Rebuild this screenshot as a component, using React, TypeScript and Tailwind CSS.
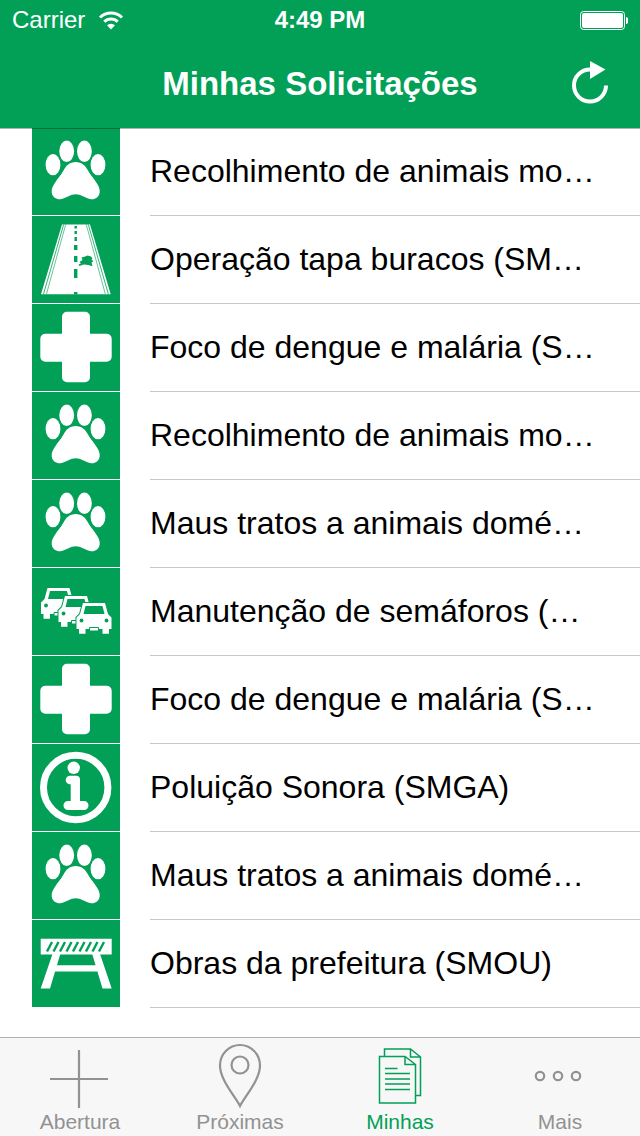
import React from "react";

type IconName = "paw" | "road" | "cross" | "cars" | "info" | "barrier";

const requests: { id: number; icon: IconName; title: string }[] = [
  { id: 1, icon: "paw", title: "Recolhimento de animais mo…" },
  { id: 2, icon: "road", title: "Operação tapa buracos (SM…" },
  { id: 3, icon: "cross", title: "Foco de dengue e malária (S…" },
  { id: 4, icon: "paw", title: "Recolhimento de animais mo…" },
  { id: 5, icon: "paw", title: "Maus tratos a animais domé…" },
  { id: 6, icon: "cars", title: "Manutenção de semáforos (…" },
  { id: 7, icon: "cross", title: "Foco de dengue e malária (S…" },
  { id: 8, icon: "info", title: "Poluição Sonora (SMGA)" },
  { id: 9, icon: "paw", title: "Maus tratos a animais domé…" },
  { id: 10, icon: "barrier", title: "Obras da prefeitura (SMOU)" },
];

const GREEN = "#02a057";

const Car = ({ x, y }: { x: number; y: number }) => (
  <g transform={`translate(${x} ${y})`}>
    <path
      d="M6.500 0h22l3 11 3.500 3.500V26h-2.500v4.800h-6.500V26H9v4.800H2.500V26H0V14.500L3.500 11z"
      fill="white"
      stroke={GREEN}
      strokeWidth="2"
      paintOrder="stroke"
    />
    <path d="M9 3h17l2 8H7z" fill={GREEN} />
    <circle cx="5" cy="17.500" r="1.900" fill={GREEN} />
    <circle cx="30" cy="17.500" r="1.900" fill={GREEN} />
    <path d="M13 24.500h9V28h-9z" fill="white" stroke={GREEN} strokeWidth="1" />
  </g>
);

const drawings: Record<IconName, React.ReactNode> = {
  paw: (
    <g fill="white">
      <ellipse cx="21" cy="36.700" rx="7.400" ry="10.600" />
      <ellipse cx="34.700" cy="23.300" rx="7.400" ry="10.800" />
      <ellipse cx="52.400" cy="23.300" rx="7.400" ry="10.800" />
      <ellipse cx="66" cy="36.700" rx="7.400" ry="10.600" />
      <path d="M43.700 34c6 0 9.500 3.500 12.300 8.500 2 4 5 7 8 11.500 3 4 4.200 7.500 3.600 11-1 5-5.600 7-9.600 6-5-1-9-4.700-14.300-4.700S34.500 70 29.500 71c-4 1-8.700-1-9.700-6-.6-3.500.7-7 3.700-11 3-4.500 6-7.500 8-11.500C34.200 37.500 37.700 34 43.700 34z" />
    </g>
  ),
  road: (
    <g>
      <path d="M30 8.500h28l20.700 69.800H9z" fill="white" />
      <g stroke={GREEN} fill="none">
        <path d="M31.700 8.500 11.500 78M56.300 8.500 76.300 78" strokeWidth="0.8" />
        <path d="M33.700 8.500 14.500 78M54.300 8.500 73.300 78" strokeWidth="0.6" />
        <path d="M43.700 10v2.500M43.700 15v3M43.700 21v4" strokeWidth="2.400" />
        <path d="M43.700 29v5M43.700 40v6M43.700 53v9M43.700 76v2.500" strokeWidth="3.400" />
      </g>
      <path
        d="M47.500 46l3-2-1-2.500 3-.8 3-1.200 3.500 1 1.500 2-1 1 2 1.800-2 1 1 4-4-1.300-5-.5-4 1.500-1-1.500 2.500-1z"
        fill={GREEN}
      />
    </g>
  ),
  cross: (
    <path
      d="M35 7.700h18a5 5 0 0 1 5 5v17h16.700a5 5 0 0 1 5 5v18a5 5 0 0 1-5 5H58v15.600a5 5 0 0 1-5 5H35a5 5 0 0 1-5-5V57.700H13.300a5 5 0 0 1-5-5v-18a5 5 0 0 1 5-5H30v-17a5 5 0 0 1 5-5z"
      fill="white"
    />
  ),
  cars: (
    <g>
      <Car x={9} y={20} />
      <Car x={26.5} y={28} />
      <Car x={44.5} y={35} />
    </g>
  ),
  info: (
    <g>
      <circle cx="43.700" cy="43.500" r="32.200" fill="none" stroke="white" strokeWidth="7" />
      <g fill="white">
        <circle cx="41.700" cy="23.800" r="6.200" />
        <path d="M38 31.700h6a4 4 0 0 1 4 4V57h4a4.500 4.500 0 0 1 0 9H36a4.500 4.500 0 0 1 0-9h2.700V40.300H38a4.300 4.300 0 0 1 0-8.600z" />
      </g>
    </g>
  ),
  barrier: (
    <g>
      <g fill="white">
        <path d="M8.700 18.700h71v15.800h-71z" />
        <path d="M20.500 34h7.800L18 68.400H8.700zM68 34h-7.800l10.300 34.400h9.200z" />
        <path d="M22 45.300h44v6.200H22z" />
      </g>
      <g stroke={GREEN} strokeWidth="2.400">
        {[15, 21.5, 28, 34.5, 41, 47.5, 54, 60.5, 67].map((x) => (
          <path key={x} d={`M${x} 31.500l5-9.500`} />
        ))}
      </g>
    </g>
  ),
};

const StatusBar = () => (
  <div className="grid grid-cols-3 items-center h-10 px-3 text-2xl">
    <div className="flex items-center gap-3">
      <span>Carrier</span>
      <svg width="28" height="20" viewBox="0 0 28 20" fill="none" stroke="white" strokeWidth="3">
        <path d="M3 7.500a15.500 15.500 0 0 1 22 0" />
        <path d="M7.300 11.800a9.500 9.500 0 0 1 13.400 0" />
        <path d="M14 19.500l-4-4.200a5.800 5.800 0 0 1 8 0z" fill="white" stroke="none" />
      </svg>
    </div>
    <span className="text-center font-bold">4:49 PM</span>
    <svg className="justify-self-end" width="50" height="20" viewBox="0 0 50 20">
      <rect x="2.500" y="1.500" width="44" height="18" rx="3" fill="none" stroke="white" />
      <rect x="4" y="3" width="41" height="15" rx="2" fill="white" />
      <path d="M48 7c2 .5 3 2 3 3.500s-1 3-3 3.500z" fill="white" />
    </svg>
  </div>
);

const tabs = [
  {
    label: "Abertura",
    active: false,
    icon: <path d="M39 12v58M10 41h58" />,
  },
  {
    label: "Próximas",
    active: false,
    icon: (
      <>
        <path d="M40 68C35 58 20 42 20 27.500a20 20.500 0 0 1 40 0C60 42 45 58 40 68z" />
        <circle cx="40" cy="27" r="8.500" />
      </>
    ),
  },
  {
    label: "Minhas",
    active: true,
    icon: (
      <g strokeWidth="1.500">
        <path d="M24.500 18.500v-7.500h26l10 8v38.500h-5M50.500 11v8h10" />
        <path d="M19.500 18.500h25.500l10.500 8V65h-36zM45 18.500v8h10.500" />
        <path d="M25 30.500h12.500M25 35.500h25M25 41h25M25 46h25M25 51.500h25" />
      </g>
    ),
  },
  {
    label: "Mais",
    active: false,
    icon: (
      <>
        <circle cx="20" cy="38" r="4.200" />
        <circle cx="38" cy="38" r="4.200" />
        <circle cx="56" cy="38" r="4.200" />
      </>
    ),
  },
];

export default function App() {
  return (
    <div className="min-h-screen flex flex-col bg-white text-black font-['Liberation_Sans',Arial,sans-serif]">
      <header className="relative z-10 bg-[#02a057] text-white shadow-[0_1px_0_rgba(0,0,0,0.3)]">
        <StatusBar />
        {/* title stays centred, the reload button takes the right column */}
        <div className="grid grid-cols-[1fr_auto_1fr] items-center h-[88px] px-7">
          <h1 className="col-start-2 text-[33px] leading-[42px] font-bold">
            Minhas Solicitações
          </h1>
          <button type="button" aria-label="Atualizar" className="justify-self-end cursor-pointer">
            <svg width="44" height="48" viewBox="0 0 44 48">
              <path d="M38 25.500a16 16 0 1 1-16-16" fill="none" stroke="white" strokeWidth="4" />
              <path d="M22 1l15.500 8.500L22 19z" fill="white" />
            </svg>
          </button>
        </div>
      </header>

      <main className="flex-1">
        <ul>
          {requests.map(({ id, icon, title }) => (
            <li key={id}>
              <button type="button" className="flex w-full h-[88px] pl-8 gap-[30px] text-left cursor-pointer">
                <svg className="shrink-0 bg-[#02a057]" width="88" height="87" viewBox="0 0 88 87">
                  {drawings[icon]}
                </svg>
                <span className="flex flex-1 min-w-0 h-full items-center border-b border-[#c8c7cc] pr-7 pb-0.5">
                  <span className="truncate text-[32px] leading-10">{title}</span>
                </span>
              </button>
            </li>
          ))}
        </ul>
      </main>

      <nav className="grid grid-cols-4 h-[99px] border-t border-[#b2b2b2] bg-[#f7f7f7]">
        {tabs.map(({ label, active, icon }) => (
          <button
            key={label}
            type="button"
            aria-current={active ? "page" : undefined}
            className={`flex flex-col items-center cursor-pointer ${
              active ? "text-[#02a057]" : "text-[#929292]"
            }`}
          >
            <svg width="80" height="72" viewBox="0 0 80 72" fill="none" stroke="currentColor" strokeWidth="2.200">
              {icon}
            </svg>
            <span className="text-[21px] leading-6">{label}</span>
          </button>
        ))}
      </nav>
    </div>
  );
}
